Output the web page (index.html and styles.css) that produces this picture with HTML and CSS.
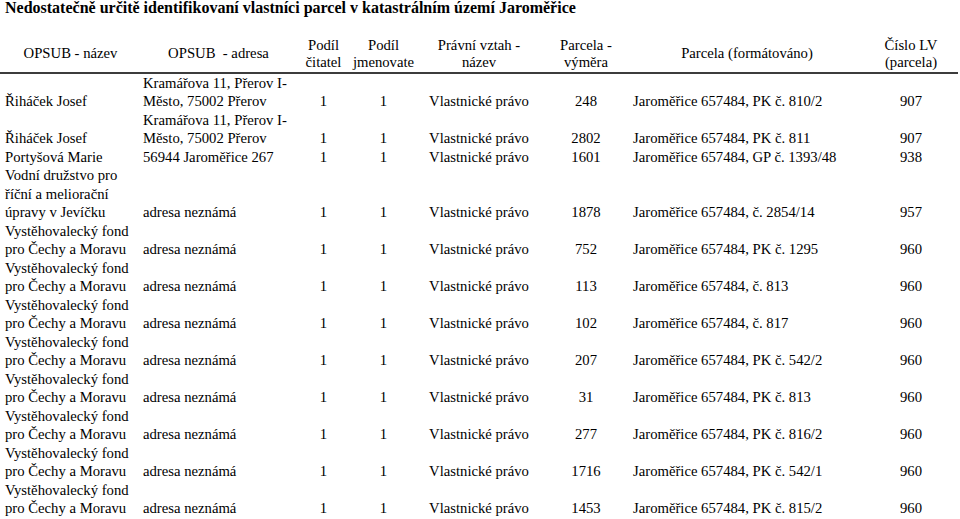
FILE: index.html
```html
<!DOCTYPE html>
<html lang="cs">
<head>
<meta charset="utf-8">
<title>Nedostatečně určitě identifikovaní vlastníci</title>
<link rel="stylesheet" href="styles.css">
</head>
<body>
<h1 class="title">Nedostatečně určitě identifikovaní vlastníci parcel v katastrálním území Jaroměřice</h1>
<table class="owners">
  <colgroup>
    <col class="c1"><col class="c2"><col class="c3"><col class="c4"><col class="c5"><col class="c6"><col class="c7"><col class="c8">
  </colgroup>
  <thead>
    <tr>
      <th>OPSUB - název</th>
      <th>OPSUB &nbsp;- adresa</th>
      <th>Podíl<br>čitatel</th>
      <th>Podíl<br>jmenovate</th>
      <th>Právní vztah -<br>název</th>
      <th>Parcela -<br>výměra</th>
      <th>Parcela (formátováno)</th>
      <th>Číslo LV<br>(parcela)</th>
    </tr>
  </thead>
  <tbody>
    <tr>
      <td class="name">Řiháček Josef</td>
      <td class="addr">Kramářova 11, Přerov I-<br>Město, 75002 Přerov</td>
      <td class="num">1</td><td class="num">1</td>
      <td class="num">Vlastnické právo</td>
      <td class="num">248</td>
      <td class="parc">Jaroměřice 657484, PK č. 810/2</td>
      <td class="num">907</td>
    </tr>
    <tr>
      <td class="name">Řiháček Josef</td>
      <td class="addr">Kramářova 11, Přerov I-<br>Město, 75002 Přerov</td>
      <td class="num">1</td><td class="num">1</td>
      <td class="num">Vlastnické právo</td>
      <td class="num">2802</td>
      <td class="parc">Jaroměřice 657484, PK č. 811</td>
      <td class="num">907</td>
    </tr>
    <tr>
      <td class="name">Portyšová Marie</td>
      <td class="addr">56944 Jaroměřice 267</td>
      <td class="num">1</td><td class="num">1</td>
      <td class="num">Vlastnické právo</td>
      <td class="num">1601</td>
      <td class="parc">Jaroměřice 657484, GP č. 1393/48</td>
      <td class="num">938</td>
    </tr>
    <tr>
      <td class="name">Vodní družstvo pro<br>říční a meliorační<br>úpravy v Jevíčku</td>
      <td class="addr">adresa neznámá</td>
      <td class="num">1</td><td class="num">1</td>
      <td class="num">Vlastnické právo</td>
      <td class="num">1878</td>
      <td class="parc">Jaroměřice 657484, č. 2854/14</td>
      <td class="num">957</td>
    </tr>
    <tr>
      <td class="name">Vystěhovalecký fond<br>pro Čechy a Moravu</td>
      <td class="addr">adresa neznámá</td>
      <td class="num">1</td><td class="num">1</td>
      <td class="num">Vlastnické právo</td>
      <td class="num">752</td>
      <td class="parc">Jaroměřice 657484, PK č. 1295</td>
      <td class="num">960</td>
    </tr>
    <tr>
      <td class="name">Vystěhovalecký fond<br>pro Čechy a Moravu</td>
      <td class="addr">adresa neznámá</td>
      <td class="num">1</td><td class="num">1</td>
      <td class="num">Vlastnické právo</td>
      <td class="num">113</td>
      <td class="parc">Jaroměřice 657484, č. 813</td>
      <td class="num">960</td>
    </tr>
    <tr>
      <td class="name">Vystěhovalecký fond<br>pro Čechy a Moravu</td>
      <td class="addr">adresa neznámá</td>
      <td class="num">1</td><td class="num">1</td>
      <td class="num">Vlastnické právo</td>
      <td class="num">102</td>
      <td class="parc">Jaroměřice 657484, č. 817</td>
      <td class="num">960</td>
    </tr>
    <tr>
      <td class="name">Vystěhovalecký fond<br>pro Čechy a Moravu</td>
      <td class="addr">adresa neznámá</td>
      <td class="num">1</td><td class="num">1</td>
      <td class="num">Vlastnické právo</td>
      <td class="num">207</td>
      <td class="parc">Jaroměřice 657484, PK č. 542/2</td>
      <td class="num">960</td>
    </tr>
    <tr>
      <td class="name">Vystěhovalecký fond<br>pro Čechy a Moravu</td>
      <td class="addr">adresa neznámá</td>
      <td class="num">1</td><td class="num">1</td>
      <td class="num">Vlastnické právo</td>
      <td class="num">31</td>
      <td class="parc">Jaroměřice 657484, PK č. 813</td>
      <td class="num">960</td>
    </tr>
    <tr>
      <td class="name">Vystěhovalecký fond<br>pro Čechy a Moravu</td>
      <td class="addr">adresa neznámá</td>
      <td class="num">1</td><td class="num">1</td>
      <td class="num">Vlastnické právo</td>
      <td class="num">277</td>
      <td class="parc">Jaroměřice 657484, PK č. 816/2</td>
      <td class="num">960</td>
    </tr>
    <tr>
      <td class="name">Vystěhovalecký fond<br>pro Čechy a Moravu</td>
      <td class="addr">adresa neznámá</td>
      <td class="num">1</td><td class="num">1</td>
      <td class="num">Vlastnické právo</td>
      <td class="num">1716</td>
      <td class="parc">Jaroměřice 657484, PK č. 542/1</td>
      <td class="num">960</td>
    </tr>
    <tr>
      <td class="name">Vystěhovalecký fond<br>pro Čechy a Moravu</td>
      <td class="addr">adresa neznámá</td>
      <td class="num">1</td><td class="num">1</td>
      <td class="num">Vlastnické právo</td>
      <td class="num">1453</td>
      <td class="parc">Jaroměřice 657484, PK č. 815/2</td>
      <td class="num">960</td>
    </tr>
  </tbody>
</table>
</body>
</html>
```
FILE: styles.css
```css
html, body {
  margin: 0;
  padding: 0;
  background: #fff;
  color: #000;
  font-family: "Liberation Serif", "Times New Roman", serif;
}

.title {
  margin: 0;
  padding-left: 5px;
  font-size: 16px;
  line-height: 16px;
  font-weight: bold;
  white-space: nowrap;
}

.owners {
  margin-top: 20.5px;
  width: 958px;
  table-layout: fixed;
  border-collapse: separate;
  border-spacing: 0;
  font-size: 14.7px;
}

.c1 { width: 141px; }
.c2 { width: 155px; }
.c3 { width: 55px; }
.c4 { width: 65px; }
.c5 { width: 126px; }
.c6 { width: 88px; }
.c7 { width: 234px; }
.c8 { width: 94px; }

.owners th {
  font-weight: normal;
  line-height: 17.5px;
  padding: 0;
  text-align: center;
  vertical-align: middle;
  white-space: nowrap;
  border-bottom: 2px solid #3c3c3c;
}

.owners td {
  line-height: 18.52px;
  padding: 0;
  vertical-align: bottom;
  white-space: nowrap;
}

.owners td.name { padding-left: 5px; text-align: left; }
.owners td.addr { padding-left: 2px; text-align: left; }
.owners td.parc { padding-left: 3px; text-align: left; }
.owners td.num { text-align: center; }
```
